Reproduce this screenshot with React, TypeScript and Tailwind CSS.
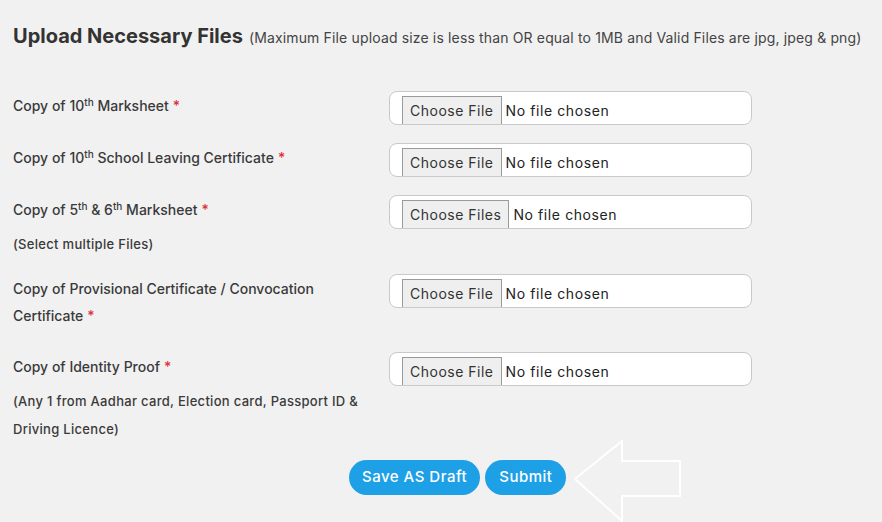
import React from 'react';

const font = { fontFamily: 'Inter, "Open Sans", "Noto Sans", Arial, sans-serif' };

function Req() {
  return <span className="ml-[4px] text-[#e0303a]">*</span>;
}

function FileBox({ multiple = false }: { multiple?: boolean }) {
  return (
    <div className="flex h-[34px] w-[363px] shrink-0 items-end rounded-[8px] border border-[#c9c9c9] bg-white pl-[12px]">
      <span className="flex h-[28px] items-center border border-b-0 border-[#9a9a9a] bg-[#efefef] px-[7px] text-[14px] tracking-[0.5px] text-[#333]">
        {multiple ? 'Choose Files' : 'Choose File'}
      </span>
      <span className="ml-[4px] flex h-[28px] items-center text-[14px] tracking-[0.6px] text-[#222]">No file chosen</span>
    </div>
  );
}

function Row({
  label,
  note,
  multiple,
  className = '',
}: {
  label: React.ReactNode;
  note?: React.ReactNode;
  multiple?: boolean;
  className?: string;
}) {
  return (
    <div className={`flex ${className}`}>
      <div className="w-[376px] pr-[20px]">
        <div className="pt-[1px] text-[14px] font-medium leading-[27px] text-[#3a3a3a]">{label}</div>
        {note && (
          <div className="mt-[7px] w-[356px] text-[13px] font-medium leading-[28px] tracking-[0.3px] text-[#3a3a3a]">
            {note}
          </div>
        )}
      </div>
      <FileBox multiple={multiple} />
    </div>
  );
}

export default function App() {
  return (
    <div className="h-[522px] w-[882px] overflow-hidden bg-[#f1f1f1] pl-[13px] pt-[21px]" style={font}>
      <h2 className="whitespace-nowrap text-[#333]">
        <span className="text-[20px] font-bold">Upload Necessary Files</span>
        <span className="ml-[6px] text-[14px] tracking-[0.15px] text-[#444]">
          (Maximum File upload size is less than OR equal to 1MB and Valid Files are jpg, jpeg &amp; png)
        </span>
      </h2>

      <div className="mt-[40px] flex flex-col">
        <Row
          label={
            <>
              Copy of 10<sup className="text-[10px]">th</sup> Marksheet<Req />
            </>
          }
        />
        <Row
          className="mt-[18px]"
          label={
            <>
              Copy of 10<sup className="text-[10px]">th</sup> School Leaving Certificate<Req />
            </>
          }
        />
        <Row
          className="mt-[18px]"
          multiple
          label={
            <>
              Copy of 5<sup className="text-[10px]">th</sup> &amp; 6<sup className="text-[10px]">th</sup> Marksheet
              <Req />
            </>
          }
          note="(Select multiple Files)"
        />
        <Row
          className="mt-[16px]"
          label={
            <>
              Copy of Provisional Certificate / Convocation Certificate<Req />
            </>
          }
        />
        <Row
          className="mt-[23px]"
          label={
            <>
              Copy of Identity Proof<Req />
            </>
          }
          note="(Any 1 from Aadhar card, Election card, Passport ID & Driving Licence)"
        />
      </div>

      <div className="relative mt-[17px] flex pl-[336px]">
        <div className="flex gap-[5px]">
          <button className="h-[35px] rounded-full bg-[#1ea0e6] px-[13px] text-[15px] font-medium tracking-[0.5px] text-white">
            Save AS Draft
          </button>
          <button className="h-[35px] rounded-full bg-[#1ea0e6] px-[14px] text-[15px] font-medium tracking-[0.5px] text-white">
            Submit
          </button>
        </div>
        <svg
          className="absolute left-[560px] top-[-21px]"
          width="112"
          height="84"
          viewBox="0 0 112 84"
          fill="none"
        >
          <path d="M2 40 L49 2 L49 22 L107 22 L107 57 L49 57 L49 82 Z" stroke="#ffffff" strokeWidth="2" strokeLinejoin="miter" />
        </svg>
      </div>
    </div>
  );
}
